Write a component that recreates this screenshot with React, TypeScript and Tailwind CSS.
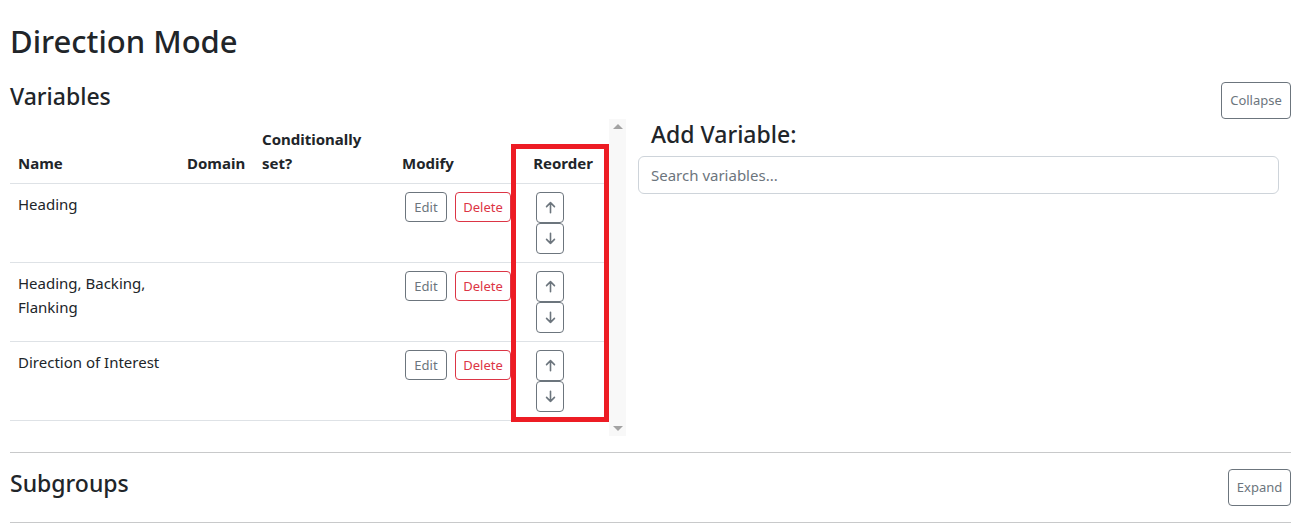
import React from "react";

const ArrowUp = () => (
  <svg width="15" height="15" viewBox="0 0 16 16" fill="none" stroke="currentColor" strokeWidth="1.7" strokeLinecap="round" strokeLinejoin="round">
    <path d="M8 13.5V2.8M3.8 7 8 2.8 12.2 7" />
  </svg>
);
const ArrowDown = () => (
  <svg width="15" height="15" viewBox="0 0 16 16" fill="none" stroke="currentColor" strokeWidth="1.7" strokeLinecap="round" strokeLinejoin="round">
    <path d="M8 2.5v10.7M3.8 9 8 13.2 12.2 9" />
  </svg>
);

const rows = ["Heading", "Heading, Backing, Flanking", "Direction of Interest"];

export default function App() {
  return (
    <div
      className="bg-white text-[#212529] pl-[10px] pr-[13px] pt-[23px]"
      style={{ fontFamily: '"Noto Sans", "Open Sans", sans-serif' }}
    >
      <h1 className="text-[31px] font-medium leading-[1.2] mb-[22px]">Direction Mode</h1>

      <div className="flex justify-between items-center">
        <h4 className="text-[23px] font-medium leading-[1.2] mb-[7px]">Variables</h4>
        <button className="h-[37px] w-[70px] border border-[#6c757d] text-[#6c757d] rounded-[4px] text-[13px]">
          Collapse
        </button>
      </div>

      <div className="flex">
        <div className="flex w-[616px] shrink-0">
          <div className="w-[599px] relative pb-[15px]">
            <table className="w-full table-fixed border-collapse text-[15px] leading-[24px]">
              <colgroup>
                <col className="w-[169px]" />
                <col className="w-[75px]" />
                <col className="w-[140px]" />
                <col className="w-[127px]" />
                <col className="w-[88px]" />
              </colgroup>
              <thead>
                <tr className="border-b border-[#dee2e6]">
                  <th className="text-left align-bottom p-[8px] font-bold">Name</th>
                  <th className="text-left align-bottom p-[8px] font-bold">Domain</th>
                  <th className="text-left align-bottom p-[8px] font-bold">Conditionally set?</th>
                  <th className="text-left align-bottom p-[8px] font-bold">Modify</th>
                  <th className="text-center align-bottom p-[8px] pr-[12px] font-bold">Reorder</th>
                </tr>
              </thead>
              <tbody>
                {rows.map((r) => (
                  <tr key={r} className="border-b border-[#dee2e6]">
                    <td className="align-top p-[8px]">{r}</td>
                    <td className="align-top p-[8px]"></td>
                    <td className="align-top p-[8px]"></td>
                    <td className="align-top py-[8px] pl-[11px]">
                      <div className="flex gap-[8px]">
                        <button className="h-[30px] w-[42px] border border-[#6c757d] text-[#6c757d] rounded-[4px] text-[13px]">
                          Edit
                        </button>
                        <button className="h-[30px] w-[56px] border border-[#dc3545] text-[#dc3545] rounded-[4px] text-[13px]">
                          Delete
                        </button>
                      </div>
                    </td>
                    <td className="align-top py-[8px] pl-[15px]">
                      <div className="flex flex-col w-[28px]">
                        <button className="h-[31px] w-[28px] flex items-center justify-center border border-[#6c757d] text-[#6c757d] rounded-[4px]">
                          <ArrowUp />
                        </button>
                        <button className="h-[31px] w-[28px] flex items-center justify-center border border-[#6c757d] text-[#6c757d] rounded-[4px]">
                          <ArrowDown />
                        </button>
                      </div>
                    </td>
                  </tr>
                ))}
              </tbody>
            </table>
            <div className="absolute left-[501px] top-[25px] w-[98px] h-[278px] border-[5px] border-[#ed1c24] pointer-events-none" />
          </div>
          <div className="w-[17px] bg-[#f8f8f8] flex flex-col justify-between items-center py-[5px]">
            <div className="w-0 h-0 border-l-[5px] border-r-[5px] border-b-[5px] border-l-transparent border-r-transparent border-b-[#a3a3a3]" />
            <div className="w-0 h-0 border-l-[5px] border-r-[5px] border-t-[5px] border-l-transparent border-r-transparent border-t-[#a3a3a3]" />
          </div>
        </div>

        <div className="flex-1 pl-[12px] pr-[12px]">
          <h4 className="text-[23px] font-medium leading-[1.2] pl-[13px] mt-[2px] mb-[7px]">Add Variable:</h4>
          <input
            className="w-full h-[38px] border border-[#ced4da] rounded-[6px] px-[12px] text-[15px] placeholder-[#6c757d] outline-none"
            placeholder="Search variables..."
          />
        </div>
      </div>

      <hr className="mt-[16px] border-t border-[#c8c9ca]" />

      <div className="flex justify-between items-center mt-[16px]">
        <h4 className="text-[23px] font-medium leading-[1.2] mb-[7px]">Subgroups</h4>
        <button className="h-[37px] w-[63px] border border-[#6c757d] text-[#6c757d] rounded-[4px] text-[13px]">
          Expand
        </button>
      </div>

      <hr className="mt-[16px] border-t border-[#c8c9ca]" />
    </div>
  );
}
